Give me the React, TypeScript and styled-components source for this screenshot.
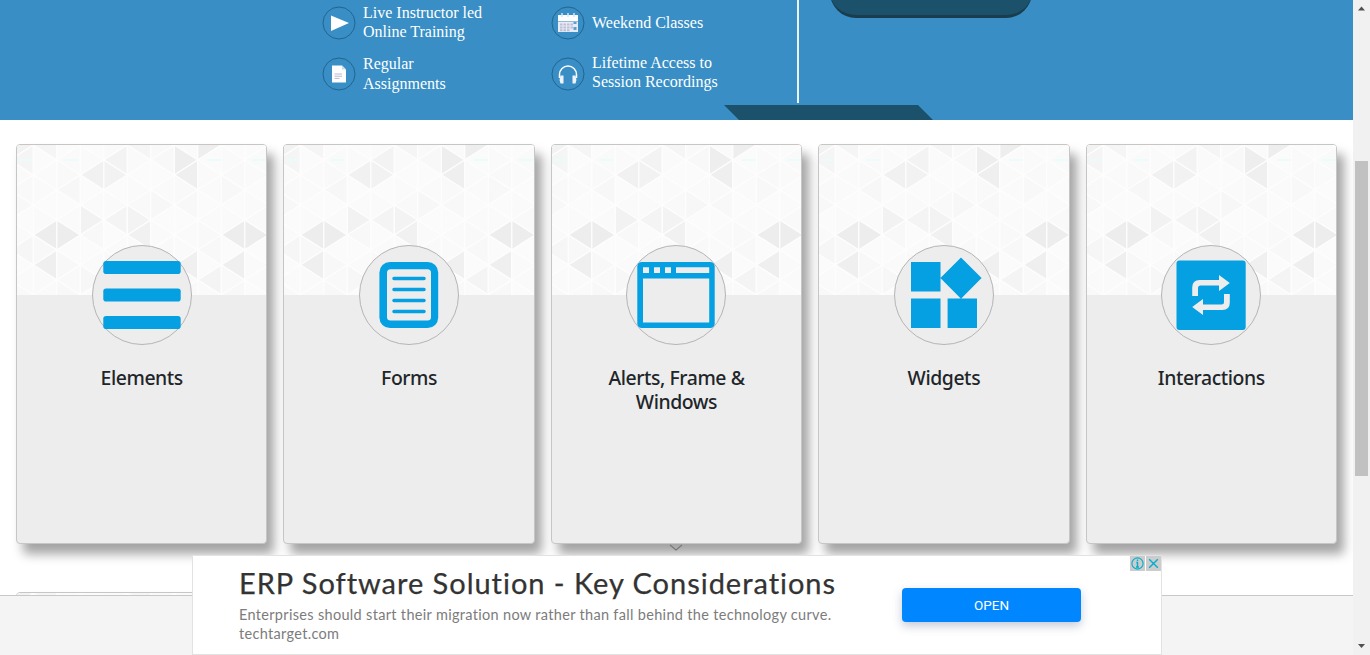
import React from 'react';
import styled, { createGlobalStyle } from 'styled-components';

const GlobalStyle = createGlobalStyle`
  * { box-sizing: border-box; }
  html, body { margin: 0; padding: 0; overflow: hidden; background: #fff; }
`;

const Window = styled.div`
  position: relative;
  display: flex;
  width: 1370px;
  height: 655px;
  overflow: hidden;
`;

const Page = styled.main`
  width: 1353px;
  height: 655px;
  display: flex;
  flex-direction: column;
  overflow: hidden;
`;

/* ---------- banner ---------- */

const Banner = styled.header`
  flex: none;
  position: relative;
  height: 120px;
  padding-left: 322px;
  display: flex;
  background: #388ec5;
  overflow: hidden;
`;

const Features = styled.div`
  display: grid;
  grid-template-columns: 229px 245.5px;
  grid-template-rows: 51px 51px;
  margin-top: -3px;
  height: 102px;
`;

const Feature = styled.div`
  display: flex;
  align-items: center;
  gap: 7px;
`;

const FeatureIcon = styled.svg`
  flex: none;
  width: 34px;
  height: 34px;
`;

const FeatureText = styled.p<{ $drop?: number; $lead?: number }>`
  margin: 0;
  padding-bottom: ${(p) => p.$drop ?? 2}px;
  font: 16px/${(p) => p.$lead ?? 19}px 'Liberation Serif', serif;
  color: #fff;
  white-space: nowrap;
`;

const Divider = styled.div`
  width: 2px;
  height: 103px;
  background: #e9f3fa;
`;

const Pill = styled.div`
  width: 202px;
  height: 52px;
  margin: -34px 0 0 31.5px;
  border-radius: 30px;
  background: #1b516b;
  border-bottom: 3px solid #193d4d;
`;

const Ribbon = styled.div`
  position: absolute;
  left: 724px;
  top: 105px;
  width: 209px;
  height: 15px;
  background: #1b516b;
  clip-path: polygon(0 0, 194px 0, 209px 100%, 15px 100%);
`;

/* ---------- cards ---------- */

const CardArea = styled.section`
  flex: none;
  height: 475px;
  padding: 24px 16px 0;
  overflow: hidden;
`;

const CardGrid = styled.div`
  display: grid;
  grid-template-columns: repeat(5, 251.4px);
  column-gap: 16px;
  row-gap: 48px;
`;

const Card = styled.article`
  height: 400px;
  display: flex;
  flex-direction: column;
  align-items: center;
  border: 1px solid #c6c6c6;
  border-radius: 4px;
  background: #ededed;
  box-shadow: 7px 10px 11px rgba(0, 0, 0, 0.36);
`;

const PatternSvg = styled.svg`
  flex: none;
  display: block;
  width: 100%;
  height: 150px;
  border-radius: 3px 3px 0 0;
`;

const Avatar = styled.div`
  flex: none;
  width: 100px;
  height: 100px;
  margin-top: -50px;
  border: 1px solid #b5b5b5;
  border-radius: 50%;
  background: #ededed;
`;

const AvatarSvg = styled.svg`
  display: block;
  width: 100px;
  height: 100px;
  margin: -1px;
`;

const CardTitle = styled.h5`
  margin: 21px 0 0;
  width: 170px;
  text-align: center;
  font: 500 19.4px/24px 'Noto Sans', 'Open Sans', sans-serif;
  letter-spacing: -0.42px;
  color: #212529;
`;

const Footer = styled.footer`
  flex: 1;
  border-top: 1px solid #c8c8c8;
  background: #f4f4f4;
`;

/* ---------- scrollbar ---------- */

const Scrollbar = styled.div`
  width: 17px;
  height: 655px;
  display: flex;
  flex-direction: column;
  align-items: center;
  justify-content: space-between;
  background: #f1f1f1;
`;

const ScrollArrow = styled.svg`
  width: 17px;
  height: 17px;
`;

const Track = styled.div`
  flex: 1;
  padding-top: 144px;
`;

const Thumb = styled.div`
  width: 13px;
  height: 315px;
  background: #c1c1c1;
`;

/* ---------- ad ---------- */

const Ad = styled.aside`
  position: absolute;
  left: 192px;
  top: 555px;
  width: 970px;
  height: 100px;
  border: 1px solid #e2e2e2;
  background: #fff;
  display: flex;
`;

const AdCopy = styled.div`
  width: 709px;
  padding: 8px 0 0 46px;
  white-space: nowrap;
`;

const AdHeadline = styled.h2`
  margin: 0;
  font: 400 29px/38px Lato, sans-serif;
  letter-spacing: 0.97px;
  color: #333;
  -webkit-text-stroke: 0.25px #333;
`;

const AdBody = styled.p`
  margin: 3px 0 0;
  font: 400 14.5px/19px Lato, sans-serif;
  letter-spacing: 0.32px;
  color: #7c7c7c;
`;

const AdButton = styled.button`
  width: 179px;
  height: 34px;
  margin-top: 32px;
  padding: 0;
  border: 0;
  border-radius: 4px;
  background: #0087ff;
  box-shadow: 0 4px 10px rgba(60, 80, 130, 0.3);
  font: 400 13.5px/34px Roboto, sans-serif;
  color: #fff;
`;

const AdChoices = styled.div`
  margin-left: auto;
  display: flex;
  gap: 1px;
`;

const ChoiceIcon = styled.svg`
  width: 15px;
  height: 15px;
  background: #ccc;
`;

const Collapse = styled.svg`
  position: absolute;
  left: 669px;
  top: 543px;
  width: 14px;
  height: 9px;
`;

/* ---------- triangle pattern ---------- */

const COL = 23.5;
const X0 = 16.3;
const colX = (c: number) => X0 + COL * c;

type Tri = { c: number; y: number; dir: 'l' | 'r' };

/* A triangle occupies the strip between column c and c+1, with its centre line at y. */
const triPoints = ({ c, y, dir }: Tri) =>
  dir === 'l'
    ? `${colX(c)},${y} ${colX(c + 1)},${y - 15} ${colX(c + 1)},${y + 15}`
    : `${colX(c + 1)},${y} ${colX(c)},${y - 15} ${colX(c)},${y + 15}`;

const shades: Record<string, string> = {
  '-1,0': '#f2f2f2', '-1,15': '#f5f5f5', '0,0': '#f5f5f5', '2,30': '#f1f1f1', '3,30': '#f2f2f2',
  '3,15': '#f3f3f3', '4,0': '#f5f5f5', '6,15': '#eeeeee',
  '6,30': '#efefef', '7,0': '#eeeeee', '2,75': '#f2f2f2', '3,75': '#f4f4f4', '4,75': '#f3f3f3',
  '4,90': '#f1f1f1', '0,90': '#ededed', '1,90': '#ededed', '0,120': '#efefef', '8,90': '#ededed',
  '9,90': '#ededed', '8,120': '#efefef', '6,120': '#f0f0f0', '7,135': '#f4f4f4', '1,45': '#f7f7f7',
  '5,60': '#f7f7f7', '1,120': '#f8f8f8', '2,135': '#f7f7f7', '-1,105': '#f6f6f6',
};
const pale = ['#fafafa', '#fbfbfb', '#f9f9f9', '#fbfbfb', '#fafafa', '#f8f8f8', '#fafafa'];

const triangles: (Tri & { fill: string })[] = [];
for (let c = -1; c < 10; c++) {
  for (let k = 0; k <= 10; k++) {
    const oddCol = Math.abs(c) % 2 === 1;
    const dir: 'l' | 'r' = (k % 2 === 0) !== oddCol ? 'l' : 'r';
    const y = k * 15;
    triangles.push({ c, y, dir, fill: shades[`${c},${y}`] ?? pale[((c + 8) * 5 + k * 3) % 7] });
  }
}

const Pattern = () => (
  <PatternSvg viewBox="0 0 249.4 150" preserveAspectRatio="none">
    <rect width="250" height="150" fill="#fafafa" />
    {triangles.map((t) => (
      <polygon key={`${t.c}-${t.y}`} points={triPoints(t)} fill={t.fill} stroke="#fdfdfd" strokeWidth="1.3" />
    ))}
    {[2, 47, 190, 235].map((x) => (
      <path key={x} d={`M${x} 15h14`} stroke="#e4fdfd" strokeWidth="1.5" />
    ))}
  </PatternSvg>
);

/* ---------- card icons ---------- */

const BLUE = '#04a0e2';
const BG = '#ededed';

const ElementsIcon = () => (
  <g fill={BLUE}>
    <rect x="11.3" y="16" width="77.4" height="13" rx="2.8" />
    <rect x="11.3" y="43.5" width="77.4" height="13" rx="2.8" />
    <rect x="11.3" y="71" width="77.4" height="13" rx="2.8" />
  </g>
);

const FormsIcon = () => (
  <g>
    <rect x="20.4" y="17" width="58.8" height="66" rx="10.5" fill={BLUE} />
    <rect x="28" y="24.2" width="44" height="51.4" rx="3.5" fill={BG} />
    <path d="M35 33.4h30M35 44.4h30M35 55.4h30M35 66.4h30" stroke={BLUE} strokeWidth="3.5" strokeLinecap="round" />
  </g>
);

const WindowsIcon = () => (
  <g>
    <rect x="11.3" y="17" width="77.4" height="66" rx="4.5" fill={BLUE} />
    <path d="M17 22.3h6v5.6h-6zM28 22.3h6v5.6h-6zM39 22.3h6v5.6h-6zM50 22.3h33.2v5.6h-33.2zM17 33.4h66.2v44.1h-66.2z" fill={BG} />
  </g>
);

const WidgetsIcon = () => (
  <path d="M17 17h29.5v29.4H17zM17 53.4h29.5v29.5H17zM53.6 53.4h29.4v29.5H53.6zM67 12.5l20.6 20.6L67 53.7 46.4 33.1z" fill={BLUE} />
);

const InteractionsIcon = () => {
  const arrow = 'M31.2 51V42.5Q31.2 35 38.7 35H58V30L68.8 38 58 46V40.5H39.5Q37 40.5 37 43V51z';
  return (
    <g>
      <rect x="15.5" y="15.5" width="69.2" height="69.4" rx="3" fill={BLUE} />
      <path d={arrow} fill={BG} />
      <path d={arrow} fill={BG} transform="rotate(180 50 50)" />
    </g>
  );
};

const cards = [
  { title: 'Elements', Icon: ElementsIcon },
  { title: 'Forms', Icon: FormsIcon },
  { title: 'Alerts, Frame & Windows', Icon: WindowsIcon },
  { title: 'Widgets', Icon: WidgetsIcon },
  { title: 'Interactions', Icon: InteractionsIcon },
];

const Ring = () => <circle cx="17" cy="17" r="16" fill="none" stroke="#22658f" strokeWidth="1" />;

export default function App() {
  return (
    <Window>
      <GlobalStyle />
      <Page>
        <Banner>
          <Features>
            <Feature>
              <FeatureIcon viewBox="0 0 34 34">
                <Ring />
                <path d="M9 9.5L27 17 9 25z" fill="#fff" />
              </FeatureIcon>
              <FeatureText>Live Instructor led<br />Online Training</FeatureText>
            </Feature>
            <Feature>
              <FeatureIcon viewBox="0 0 34 34">
                <Ring />
                <path d="M7 9h20v6H7z" fill="#fff" />
                <path d="M7 15.5h20V26H7z" fill="#e6ebf5" />
                <path d="M11 7v4M17 7v4M23 7v4" stroke="#d5e5f2" strokeWidth="1.5" />
                <path d="M9 18.5h13M9 21.5h13M9 24.2h10" stroke="#bdbfd6" strokeWidth="2" strokeDasharray="2.5 1" />
                <path d="M22.5 16h3v2h-3zM22.5 21h3v3h-3z" fill="#5d9fcf" />
              </FeatureIcon>
              <FeatureText $drop={0}>Weekend Classes</FeatureText>
            </Feature>
            <Feature>
              <FeatureIcon viewBox="0 0 34 34">
                <Ring />
                <path d="M10 8.5h10l4 4V25.5H10z" fill="#fff" />
                <path d="M20 8.5v4h4z" fill="#c7dcec" />
                <path d="M12.5 17h7.5M12.5 19.2h7.5M12.5 21.4h5" stroke="#b9b7d0" strokeWidth="1" />
              </FeatureIcon>
              <FeatureText $drop={0} $lead={20}>Regular<br />Assignments</FeatureText>
            </Feature>
            <Feature>
              <FeatureIcon viewBox="0 0 34 34">
                <Ring />
                <path d="M8.5 21v-3.5a8.5 8.5 0 0 1 17 0V21" fill="none" stroke="#fff" strokeWidth="1.5" />
                <path d="M9.5 18.5h3v8h-3q-1.7-4 0-8zM24.5 18.5h-3v8h3q1.7-4 0-8z" fill="#eef4fa" />
              </FeatureIcon>
              <FeatureText $drop={3}>Lifetime Access to<br />Session Recordings</FeatureText>
            </Feature>
          </Features>
          <Divider />
          <Pill />
          <Ribbon />
        </Banner>
        <CardArea>
          <CardGrid>
            {cards.map(({ title, Icon }) => (
              <Card key={title}>
                <Pattern />
                <Avatar>
                  <AvatarSvg viewBox="0 0 100 100"><Icon /></AvatarSvg>
                </Avatar>
                <CardTitle>{title}</CardTitle>
              </Card>
            ))}
            <Card>
              <Pattern />
            </Card>
          </CardGrid>
        </CardArea>
        <Footer />
      </Page>
      <Scrollbar>
        <ScrollArrow viewBox="0 0 17 17"><path d="M5 10.5h7l-3.5-4z" fill="#505050" /></ScrollArrow>
        <Track><Thumb /></Track>
        <ScrollArrow viewBox="0 0 17 17"><path d="M5 6h7l-3.5 4z" fill="#505050" /></ScrollArrow>
      </Scrollbar>
      <Collapse viewBox="0 0 14 9"><path d="M1 2l6 5 6-5" fill="none" stroke="#777" strokeWidth="1.1" /></Collapse>
      <Ad>
        <AdCopy>
          <AdHeadline>ERP Software Solution - Key Considerations</AdHeadline>
          <AdBody>
            Enterprises should start their migration now rather than fall behind the technology curve.
            <br />
            techtarget.com
          </AdBody>
        </AdCopy>
        <AdButton>OPEN</AdButton>
        <AdChoices>
          <ChoiceIcon viewBox="0 0 15 15">
            <circle cx="7.5" cy="7.5" r="5.6" fill="none" stroke="#00aecd" strokeWidth="1.1" />
            <path d="M7.5 3.5v1.5M6.3 6.5h1.2v4.5M6 11h3" fill="none" stroke="#00aecd" strokeWidth="1.4" />
          </ChoiceIcon>
          <ChoiceIcon viewBox="0 0 15 15">
            <path d="M3.2 3.2l8.6 8.6M11.800 3.2l-8.6 8.6" stroke="#00aecd" strokeWidth="1.4" />
          </ChoiceIcon>
        </AdChoices>
      </Ad>
    </Window>
  );
}
